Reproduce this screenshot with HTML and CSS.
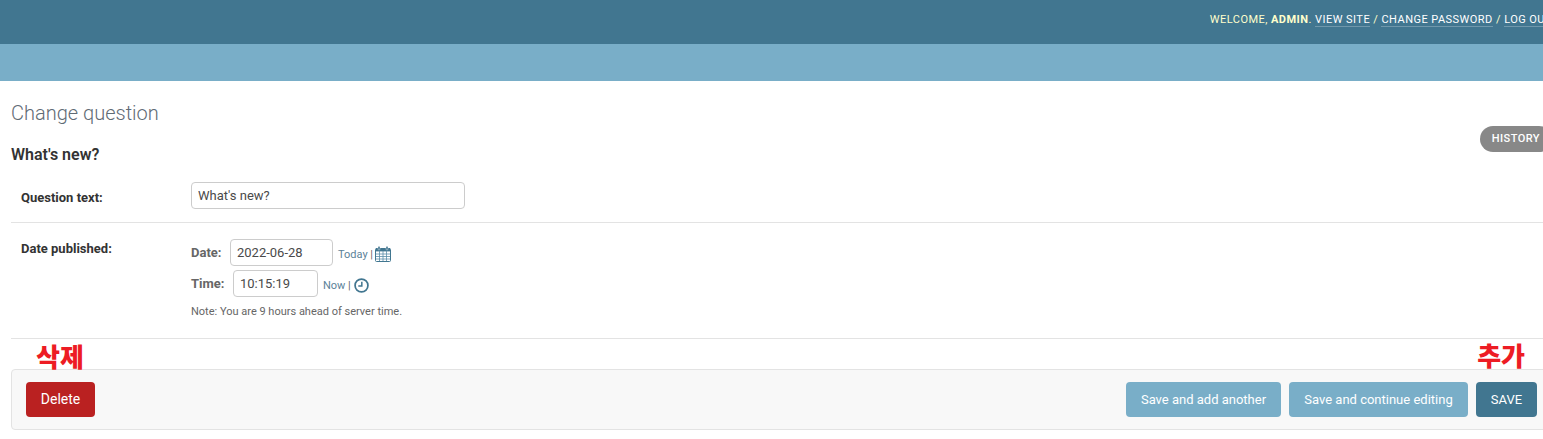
FILE: index.html
```html
<!DOCTYPE html>
<html lang="en">
<head>
<meta charset="utf-8">
<title>Change question</title>
<link rel="stylesheet" href="styles.css">
</head>
<body>
<div class="page">
  <header class="header">
    <div class="user-tools">Welcome, <strong class="user-name">admin</strong>. <a class="tool-link" href="#">View site</a> / <a class="tool-link" href="#">Change password</a> / <a class="tool-link" href="#">Log out</a></div>
  </header>
  <div class="breadcrumbs"></div>
  <main class="content">
    <div class="title-row">
      <h1 class="title">Change question</h1>
    </div>
    <div class="object-row">
      <h2 class="subtitle">What's new?</h2>
      <a class="history" href="#">History</a>
    </div>
    <div class="form-row question-row">
      <label class="row-label">Question text:</label>
      <input class="text-input question-input" type="text" value="What's new?">
    </div>
    <div class="form-row date-row">
      <label class="row-label date-label">Date published:</label>
      <div class="datetime">
        <p class="dt-line">
          <span class="dt-label">Date:</span>
          <input class="text-input date-input" type="text" value="2022-06-28">
          <span class="shortcuts"><a class="shortcut" href="#">Today</a> |</span>
          <svg class="cal-icon" viewBox="0 0 16 16" aria-hidden="true">
            <rect x="0.5" y="2.5" width="15" height="13" rx="1" fill="#fff" stroke="#417690"/>
            <rect x="1" y="2" width="14" height="3.4" fill="#417690"/>
            <rect x="3" y="0.3" width="2" height="3.7" rx="1" fill="#417690" stroke="#fff" stroke-width="0.4"/>
            <rect x="11" y="0.3" width="2" height="3.7" rx="1" fill="#417690" stroke="#fff" stroke-width="0.4"/>
            <path d="M1 8h14M1 10.5h14M1 13h14M4.5 5v10M8 5v10M11.5 5v10" stroke="#5b8ea8" stroke-width="0.8" fill="none"/>
          </svg>
        </p>
        <p class="dt-line">
          <span class="dt-label">Time:</span>
          <input class="text-input time-input" type="text" value="10:15:19">
          <span class="shortcuts"><a class="shortcut" href="#">Now</a> |</span>
          <svg class="clock-icon" viewBox="0 0 14 14" aria-hidden="true">
            <circle cx="7" cy="7" r="6" fill="none" stroke="#417690" stroke-width="1.6"/>
            <path d="M7.3 3.4v4H4" fill="none" stroke="#417690" stroke-width="1.4"/>
          </svg>
        </p>
        <p class="help">Note: You are 9 hours ahead of server time.</p>
      </div>
    </div>
    <div class="submit-wrap">
      <span class="note note-delete">삭제</span>
      <span class="note note-add">추가</span>
      <div class="submit-row">
        <a class="btn btn-delete" href="#">Delete</a>
        <div class="actions">
          <a class="btn btn-light add-btn" href="#">Save and add another</a>
          <a class="btn btn-light cont-btn" href="#">Save and continue editing</a>
          <a class="btn btn-save" href="#">SAVE</a>
        </div>
      </div>
    </div>
  </main>
</div>
</body>
</html>
```
FILE: styles.css
```css
* { box-sizing: border-box; }
html, body { margin: 0; padding: 0; height: 100%; overflow: hidden; background: #fff; }
body { font-family: Roboto, "Liberation Sans", sans-serif; font-size: 14px; color: #333; }
.page { width: 1563px; }
.header { height: 44px; background: #417690; display: flex; justify-content: flex-end; padding: 12px 11px 0; }
.user-tools { font-size: 11px; line-height: 15px; letter-spacing: .46px; text-transform: uppercase; color: #ffc; white-space: nowrap; }
.user-name { font-weight: 700; }
.tool-link { color: #fff; text-decoration: none; border-bottom: 1px solid rgba(255,255,255,.25); }
.breadcrumbs { height: 37px; background: #79aec8; }
.content { padding: 0 11px; }
.title-row { padding-top: 20px; height: 60px; }
.title { margin: 0; font-size: 20px; line-height: 24px; font-weight: 300; color: #5f6b75; }
.object-row { display: flex; justify-content: space-between; align-items: flex-start; height: 41px; position: relative; }
.subtitle { margin: 0; font-size: 16px; line-height: 27px; font-weight: 600; color: #333; }
.history { position: absolute; right: 0; top: -15px; height: 26px; line-height: 26px; padding: 0 12px; border-radius: 15px; background: #888; color: #fff; font-size: 11px; font-weight: 500; letter-spacing: .45px; text-transform: uppercase; text-decoration: none; }
.form-row { display: flex; border-bottom: 1px solid #e3e3e3; padding-left: 10px; }
.question-row { height: 41px; align-items: flex-start; }
.date-row { height: 116px; padding-top: 16px; }
.row-label { width: 170px; flex: none; font-size: 13px; font-weight: 700; color: #333; line-height: 16px; }
.question-row .row-label { padding-top: 8px; }
.date-label { padding-top: 2px; }
.text-input { font-family: Roboto, "Liberation Sans", sans-serif; font-size: 13px; color: #4a4a4a; height: 27px; padding: 0 6px; border: 1px solid #ccc; border-radius: 4px; background: #fff; margin: 0; outline: none; }
.question-input { width: 274px; height: 27px; }
.datetime { display: flex; flex-direction: column; }
.dt-line { margin: 0 0 4px; display: flex; align-items: center; height: 27px; }
.dt-label { font-size: 13px; font-weight: 700; color: #666; width: 39px; }
.date-input { width: 103px; }
.time-input { width: 85px; margin-left: 3px; }
.shortcuts { font-size: 11px; color: #666; margin-left: 5px; padding-top: 3px; }
.shortcut { color: #5b8298; text-decoration: none; }
.cal-icon { width: 16px; height: 16px; margin-left: 2px; margin-top: 2px; }
.clock-icon { width: 15px; height: 15px; margin-left: 3px; margin-top: 3px; }
.help { margin: 4px 0 0; font-size: 11px; line-height: 14px; color: #666; }
.submit-wrap { position: relative; padding-top: 30px; }
.note { position: absolute; top: 2px; font-family: "Noto Sans CJK KR", sans-serif; font-weight: 900; font-size: 26px; line-height: 30px; color: #ed1c24; }
.note-delete { left: 25px; }
.note-add { right: 27px; top: 1px; }
.submit-row { height: 61px; display: flex; justify-content: space-between; align-items: center; padding: 0 14px; background: #f8f8f8; border: 1px solid #e3e3e3; border-radius: 4px; }
.actions { display: flex; gap: 8px; }
.btn { display: block; height: 35px; line-height: 35px; border-radius: 4px; color: #fff; text-decoration: none; font-size: 13px; text-align: center; }
.btn-delete { width: 69px; background: #ba2121; font-size: 14px; }
.btn-light { background: #79aec8; }
.add-btn { width: 155px; }
.cont-btn { width: 179px; }
.btn-save { width: 61px; background: #417690; font-weight: 400; font-size: 13px; }
```
